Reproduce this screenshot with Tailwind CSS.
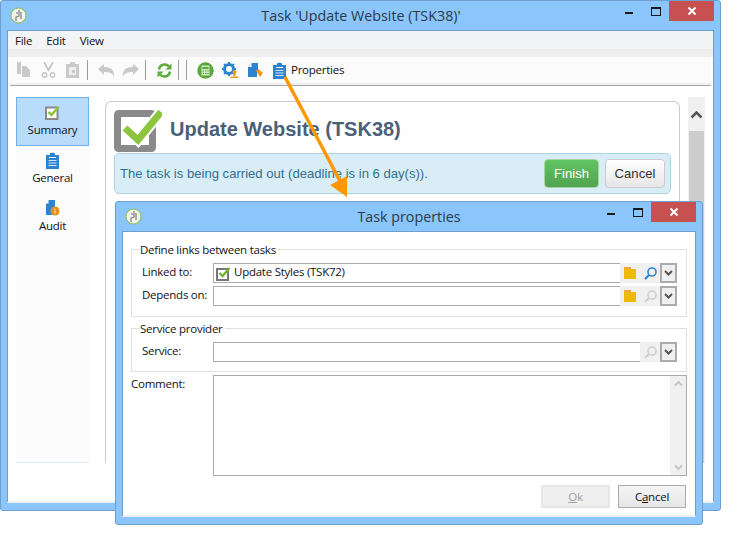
<!DOCTYPE html>
<html lang="en">

<head>
    <meta charset="UTF-8">
    <title>Task 'Update Website (TSK38)'</title>
    <script src="https://cdn.jsdelivr.net/npm/@tailwindcss/browser@4"></script>
</head>

<body class="relative w-[748px] h-[539px] bg-white overflow-hidden font-['Open_Sans',sans-serif] text-[11.5px] tracking-[-0.25px] text-[#111]">

    <!-- main window -->
    <div class="absolute left-0 top-0 w-[721px] h-[511px] bg-[#8ac5fb] border border-[#6f9fcc] rounded-[3px] flex flex-col">
        <div class="h-[29px] relative flex items-center justify-center text-[14.3px] tracking-normal text-[#2b3a48] pl-[1px] shrink-0">
            <svg class="absolute left-[9px] top-[6px]" width="17" height="17" viewBox="0 0 17 17"><circle cx="8.5" cy="8.5" r="7.5" fill="#f1f3ec" stroke="#8dbb45" stroke-width="1"/><path d="M9 3v6l-3 1v4M11 5v7M7 5v2" stroke="#888" stroke-width="1.3" fill="none"/></svg>
            <span>Task 'Update Website (TSK38)'</span>
            <div class="absolute right-[6px] top-[0px] w-[45px] h-[20px] bg-[#c75050] flex items-center justify-center">
                <svg width="10" height="10" viewBox="0 0 10 10"><path d="M1.5 1.5l7 7M8.500 1.500l-7 7" stroke="#fff" stroke-width="2"/></svg>
            </div>
            <div class="absolute right-[59px] top-[6px] w-[10px] h-[9px] border border-[#1a1a1a] border-t-2"></div>
            <div class="absolute right-[87px] top-[11px] w-[8px] h-[2px] bg-[#1a1a1a]"></div>
        </div>
        <div class="mx-[6px] w-[707px] h-[473px] bg-white border-t border-l border-r border-[#6f9fcc] border-b-2 border-b-[#efefef] flex flex-col">
            <div class="h-[18px] bg-[#f3f4f6] flex items-center gap-[14px] pl-[7px] pt-[2px] shrink-0">
                <span>File</span><span>Edit</span><span>View</span>
            </div>
            <div class="h-[8px] bg-[#efefef] shrink-0 border-t border-[#eaeaea]"></div>
            <!-- toolbar -->
            <div class="h-[26px] ml-[2px] mr-[2px] bg-[#fbfbfb] flex items-center shrink-0 pl-[6px]">
                <svg class="shrink-0" width="15" height="16" viewBox="0 0 15 16"><path d="M1 0h4v12H1zM6 4h4l4 4v7H6z" fill="#c9c9c9"/></svg>
                <svg class="ml-[10px] shrink-0" width="15" height="16" viewBox="0 0 15 16"><path d="M3 0l5 9M12 0L7 9" stroke="#c4c4c4" stroke-width="1.6"/><circle cx="3.500" cy="13" r="2.200" fill="none" stroke="#c4c4c4" stroke-width="1.400"/><circle cx="11.500" cy="13" r="2.200" fill="none" stroke="#c4c4c4" stroke-width="1.400"/></svg>
                <svg class="ml-[10px] shrink-0" width="13" height="16" viewBox="0 0 13 16"><path d="M0 2h4V0h5v2h4v14H0z" fill="#c9c9c9"/><path d="M3 5h7v8H3z" fill="#efefef"/><path d="M6 8h3v3H6z" fill="#c9c9c9"/></svg>
                <div class="ml-[8px] w-px h-[20px] bg-[#9a9a9a] shrink-0"></div>
                <svg class="ml-[10px] shrink-0" width="16" height="13" viewBox="0 0 16 13"><path d="M0 5l6-5v3c6 0 10 2 10 8v2c-1-4-5-5-10-5v3z" fill="#c9c9c9"/></svg>
                <svg class="ml-[9px] shrink-0" width="16" height="13" viewBox="0 0 16 13"><path d="M16 5l-6-5v3C4 3 0 5 0 11v2c1-4 5-5 10-5v3z" fill="#c9c9c9"/></svg>
                <div class="ml-[6px] w-px h-[20px] bg-[#9a9a9a] shrink-0"></div>
                <svg class="ml-[11px] shrink-0" width="15" height="15" viewBox="0 0 15 15"><path d="M2 6.500A5.700 5.700 0 0 1 12 3.500M13 8.500A5.700 5.700 0 0 1 3 11.500" fill="none" stroke="#5cae3a" stroke-width="2.400"/><path d="M14.500 0.500v6h-6zM0.500 14.500v-6h6z" fill="#5cae3a"/></svg>
                <div class="ml-[6px] w-px h-[20px] bg-[#9a9a9a] shrink-0"></div>
                <div class="ml-[7px] w-px h-[20px] bg-[#9a9a9a] shrink-0"></div>
                <svg class="ml-[10px] shrink-0" width="17" height="17" viewBox="0 0 17 17"><circle cx="8.500" cy="8.500" r="8.200" fill="#58a83a"/><rect x="4.500" y="3.500" width="8" height="10" fill="#cfe5c3"/><path d="M5.500 5h6v2h-6z" fill="#58a83a"/><path d="M5.500 8.500h1.500v1h-1.500zM8 8.500h1.500v1H8zM10.300 8.500h1.500v1h-1.500zM5.500 11h1.500v1h-1.500zM8 11h1.500v1H8zM10.300 11h1.500v1h-1.500z" fill="#58a83a"/></svg>
                <svg class="ml-[8px] shrink-0" width="17" height="16" viewBox="0 0 17 16"><circle cx="7" cy="7" r="4.500" fill="none" stroke="#2d83d0" stroke-width="3"/><path d="M7 0v14M0 7h14M2 2l10 10M12 2L2 12" stroke="#2d83d0" stroke-width="2"/><circle cx="7" cy="7" r="3" fill="#fbfbfb"/><circle cx="12.500" cy="10" r="2" fill="#ef9a1f"/><path d="M8.500 16v-1.500h8V16zM11.500 14v-3h2v3z" fill="#ef9a1f"/></svg>
                <svg class="ml-[9px] shrink-0" width="15" height="15" viewBox="0 0 15 15"><path d="M4 0h6v9H9v5H0V4z" fill="#2d83d0"/><path d="M3.500 0.500v3.500H0z" fill="#fff"/><path d="M8 8l2.500-2 4.500 4-3 4z" fill="#ef9a1f"/></svg>
                <svg class="ml-[10px] shrink-0" width="13" height="17" viewBox="0 0 13 17"><path d="M0 3h4V1.500C4 0.500 9 0.500 9 1.500V3h4v14H0z" fill="#2d83d0"/><path d="M3 5h7v1H3z" fill="#fff"/><path d="M2.500 8h8v1h-8zM2.500 10.500h8v1h-8zM2.500 13h8v1h-8z" fill="#cfe3f6"/></svg>
                <span class="ml-[5px]">Properties</span>
            </div>
            <div class="h-[3px] ml-[2px] mr-[2px] bg-[#f0f0f0] border-b border-[#a6a6a6] shrink-0"></div>
            <!-- body -->
            <div class="flex mt-[11px] ml-[8px] items-start">
                <div class="w-[73px] h-[366px] bg-[#fbfbfb] border-b border-[#e2ebf8] flex flex-col items-center shrink-0">
                    <div class="w-[73px] h-[49px] bg-[#b9dcfb] border border-[#6cb0ee] flex flex-col items-center pt-[7px] gap-[1px]">
                        <svg width="15" height="15" viewBox="0 0 15 15"><path d="M1 2.500h11.500v11.500H1z" fill="#fff" stroke="#8a8a8a" stroke-width="2"/><path d="M3.500 7l3 3 7-8" fill="none" stroke="#8cc63f" stroke-width="2.500"/></svg>
                        <span>Summary</span>
                    </div>
                    <svg class="mt-[6px]" width="13" height="17" viewBox="0 0 13 17"><path d="M0 3h4V1.500C4 0.500 9 0.500 9 1.500V3h4v14H0z" fill="#2d83d0"/><path d="M3 5h7v1H3z" fill="#fff"/><path d="M2.500 8h8v1h-8zM2.500 10.500h8v1h-8zM2.500 13h8v1h-8z" fill="#cfe3f6"/></svg>
                    <span>General</span>
                    <svg class="mt-[14px]" width="14" height="16" viewBox="0 0 14 16"><path d="M3 0h6v9H8v6H0V4z" fill="#2d83d0"/><path d="M2.500 0.500v3H0z" fill="#fff"/><circle cx="9" cy="11" r="4.500" fill="#ef8f12"/><path d="M8.500 8.500h1v1h-1zM8.500 10.500h1v3h-1z" fill="#fff"/></svg>
                    <span class="mt-[1px]">Audit</span>
                </div>
                <div class="ml-[16px] mt-[4px] w-[575px] h-[362px] bg-white border-t border-l border-r border-[#cccccc] rounded-t-[6px] pl-[8px] pr-[8px] pt-[6px] font-['Liberation_Sans',sans-serif] tracking-normal shrink-0">
                    <div class="flex items-center h-[44px]">
                        <svg class="shrink-0" width="48" height="43" viewBox="0 0 48 43"><rect x="3.500" y="4.500" width="35" height="35" rx="1" fill="#fff" stroke="#8a8a8a" stroke-width="7"/><path d="M11 19l13 12L47 3" fill="none" stroke="#fff" stroke-width="11"/><path d="M11 19l13 12L47 3" fill="none" stroke="#8cc63f" stroke-width="7"/></svg>
                        <span class="ml-[8px] text-[20px] font-bold text-[#4a5f78] pb-[2px]">Update Website (TSK38)</span>
                    </div>
                    <div class="mt-[1px] w-[557px] h-[41px] bg-[#d9edf7] border border-[#aed3e0] rounded-[5px] flex items-center pl-[5px] pr-[5px] text-[13.1px] text-[#31708f]">
                        <span>The task is being carried out (deadline is in 6 day(s)).</span>
                        <div class="ml-auto w-[55px] h-[29px] rounded-[4px] border border-[#a5d6a0] bg-gradient-to-b from-[#62c462] to-[#51a351] text-white flex items-center justify-center">Finish</div>
                        <div class="ml-[6px] w-[60px] h-[29px] rounded-[4px] border border-[#cccccc] bg-gradient-to-b from-white to-[#e6e6e6] text-[#333] flex items-center justify-center">Cancel</div>
                    </div>
                </div>
                <!-- scrollbar -->
                <div class="ml-[8px] w-[17px] h-[366px] bg-[#f0f0f0] flex flex-col items-center shrink-0">
                    <div class="h-[34px] flex items-center justify-center">
                        <svg width="13" height="9" viewBox="0 0 13 9"><path d="M1.500 7.500l5-5 5 5" fill="none" stroke="#555" stroke-width="2.500"/></svg>
                    </div>
                    <div class="w-[15px] flex-1 bg-[#cdcdcd]"></div>
                </div>
            </div>
        </div>
    </div>

    <!-- arrow -->
    <svg class="absolute left-0 top-0 z-10" width="748" height="539" viewBox="0 0 748 539"><path d="M285 77L340 181" stroke="#ff9800" stroke-width="3.500" fill="none"/><path d="M347 197L330 185L347 176z" fill="#ff9800"/></svg>

    <!-- task properties dialog -->
    <div class="absolute z-20 left-[115px] top-[201px] w-[588px] h-[324px] bg-[#8ac5fb] border border-[#6f9fcc] rounded-[3px] flex flex-col">
        <div class="h-[29px] relative flex items-center justify-center text-[14.3px] tracking-normal text-[#2b3a48] shrink-0">
            <svg class="absolute left-[9px] top-[6px]" width="17" height="17" viewBox="0 0 17 17"><circle cx="8.500" cy="8.500" r="7.500" fill="#f1f3ec" stroke="#8dbb45" stroke-width="1"/><path d="M9 3v6l-3 1v4M11 5v7M7 5v2" stroke="#888" stroke-width="1.300" fill="none"/></svg>
            <span>Task properties</span>
            <div class="absolute right-[6px] top-[0px] w-[45px] h-[20px] bg-[#c75050] flex items-center justify-center">
                <svg width="10" height="10" viewBox="0 0 10 10"><path d="M1.500 1.500l7 7M8.500 1.500l-7 7" stroke="#fff" stroke-width="2"/></svg>
            </div>
            <div class="absolute right-[59px] top-[6px] w-[10px] h-[9px] border border-[#1a1a1a] border-t-2"></div>
            <div class="absolute right-[87px] top-[11px] w-[8px] h-[2px] bg-[#1a1a1a]"></div>
        </div>
        <div class="mx-[6px] w-[574px] h-[286px] bg-white border-t border-l border-r border-[#6f9fcc] border-b-2 border-b-[#efefef] pl-[8px] flex flex-col">
            <!-- links group -->
            <div class="relative mt-[17px] w-[556px] h-[68px] border border-[#e0e0e0] pl-[10px] pt-[13px] flex flex-col gap-[3px] shrink-0">
                <span class="absolute left-[8px] top-[-8px] bg-white pr-[2px] leading-[16px]">Define links between tasks</span>
                <div class="flex items-center h-[20px]">
                    <span class="w-[71px] shrink-0 pb-[2px]">Linked to:</span>
                    <div class="w-[407px] h-[20px] border-t border-b border-l border-[#ababab] flex items-center pl-[2px] shrink-0">
                        <svg class="shrink-0" width="15" height="15" viewBox="0 0 15 15"><path d="M1 3h11v11H1z" fill="#fff" stroke="#777" stroke-width="2"/><path d="M3.500 7l3 3 7-8" fill="none" stroke="#6cb52d" stroke-width="2.300"/></svg>
                        <span class="ml-[3px] pb-[2px]">Update Styles (TSK72)</span>
                    </div>
                    <div class="w-[40px] h-[20px] bg-[#f0f0f0] flex items-center shrink-0">
                        <svg class="ml-[4px]" width="12" height="12" viewBox="0 0 12 12"><path d="M0 0h7v2H0z" fill="#f0a63e"/><path d="M0 2h12v10H0z" fill="#efb908"/></svg>
                        <svg class="ml-[8px]" width="13" height="13" viewBox="0 0 13 13"><circle cx="8" cy="5" r="4" fill="none" stroke="#2d83d0" stroke-width="1.600"/><path d="M5 8l-4 4" stroke="#2d83d0" stroke-width="2.200"/></svg>
                    </div>
                    <div class="w-[17px] h-[20px] border-2 border-[#ababab] bg-[#f0f0f0] flex items-center justify-center shrink-0">
                        <svg width="9" height="7" viewBox="0 0 9 7"><path d="M1 1l3.500 3.500L8 1" fill="none" stroke="#555" stroke-width="2"/></svg>
                    </div>
                </div>
                <div class="flex items-center h-[20px]">
                    <span class="w-[71px] shrink-0 pb-[2px]">Depends on:</span>
                    <div class="w-[407px] h-[20px] border-t border-b border-l border-[#ababab] shrink-0"></div>
                    <div class="w-[40px] h-[20px] bg-[#f0f0f0] flex items-center shrink-0">
                        <svg class="ml-[4px]" width="12" height="12" viewBox="0 0 12 12"><path d="M0 0h7v2H0z" fill="#f0a63e"/><path d="M0 2h12v10H0z" fill="#efb908"/></svg>
                        <svg class="ml-[8px]" width="13" height="13" viewBox="0 0 13 13"><circle cx="8" cy="5" r="4" fill="none" stroke="#cfcfcf" stroke-width="1.600"/><path d="M5 8l-4 4" stroke="#cfcfcf" stroke-width="2.200"/></svg>
                    </div>
                    <div class="w-[17px] h-[20px] border-2 border-[#ababab] bg-[#f0f0f0] flex items-center justify-center shrink-0">
                        <svg width="9" height="7" viewBox="0 0 9 7"><path d="M1 1l3.500 3.500L8 1" fill="none" stroke="#555" stroke-width="2"/></svg>
                    </div>
                </div>
            </div>
            <!-- service group -->
            <div class="relative mt-[11px] w-[556px] h-[44px] border border-[#e0e0e0] pl-[10px] pt-[13px] shrink-0">
                <span class="absolute left-[8px] top-[-8px] bg-white pr-[2px] leading-[16px]">Service provider</span>
                <div class="flex items-center h-[20px]">
                    <span class="w-[71px] shrink-0 pb-[2px]">Service:</span>
                    <div class="w-[427px] h-[20px] border-t border-b border-l border-[#ababab] shrink-0"></div>
                    <div class="w-[20px] h-[20px] bg-[#f0f0f0] flex items-center justify-center shrink-0">
                        <svg width="13" height="13" viewBox="0 0 13 13"><circle cx="8" cy="5" r="4" fill="none" stroke="#cfcfcf" stroke-width="1.600"/><path d="M5 8l-4 4" stroke="#cfcfcf" stroke-width="2.200"/></svg>
                    </div>
                    <div class="w-[17px] h-[20px] border-2 border-[#ababab] bg-[#f0f0f0] flex items-center justify-center shrink-0">
                        <svg width="9" height="7" viewBox="0 0 9 7"><path d="M1 1l3.500 3.500L8 1" fill="none" stroke="#555" stroke-width="2"/></svg>
                    </div>
                </div>
            </div>
            <!-- comment -->
            <div class="flex mt-[3px] shrink-0">
                <span class="w-[82px] shrink-0">Comment:</span>
                <div class="w-[474px] h-[101px] border border-[#ababab] flex justify-end">
                    <div class="w-[16px] h-full bg-[#f0f0f0] flex flex-col justify-between items-center py-[4px]">
                        <svg width="9" height="7" viewBox="0 0 9 7"><path d="M1 5.500l3.500-3.500L8 5.500" fill="none" stroke="#c4c4c4" stroke-width="1.800"/></svg>
                        <svg width="9" height="7" viewBox="0 0 9 7"><path d="M1 1.500l3.500 3.500L8 1.500" fill="none" stroke="#c4c4c4" stroke-width="1.800"/></svg>
                    </div>
                </div>
            </div>
            <div class="flex justify-end gap-[8px] mt-[9px] w-[555px] shrink-0">
                <div class="w-[69px] h-[23px] border-2 border-[#e6e6e6] bg-[#efefef] text-[#a0a0a0] flex items-center justify-center"><span><u>O</u>k</span></div>
                <div class="w-[68px] h-[23px] border border-[#ababab] bg-gradient-to-b from-[#f4f4f4] to-[#e6e6e6] flex items-center justify-center"><span>C<u>a</u>ncel</span></div>
            </div>
        </div>
    </div>
</body>
</html>
